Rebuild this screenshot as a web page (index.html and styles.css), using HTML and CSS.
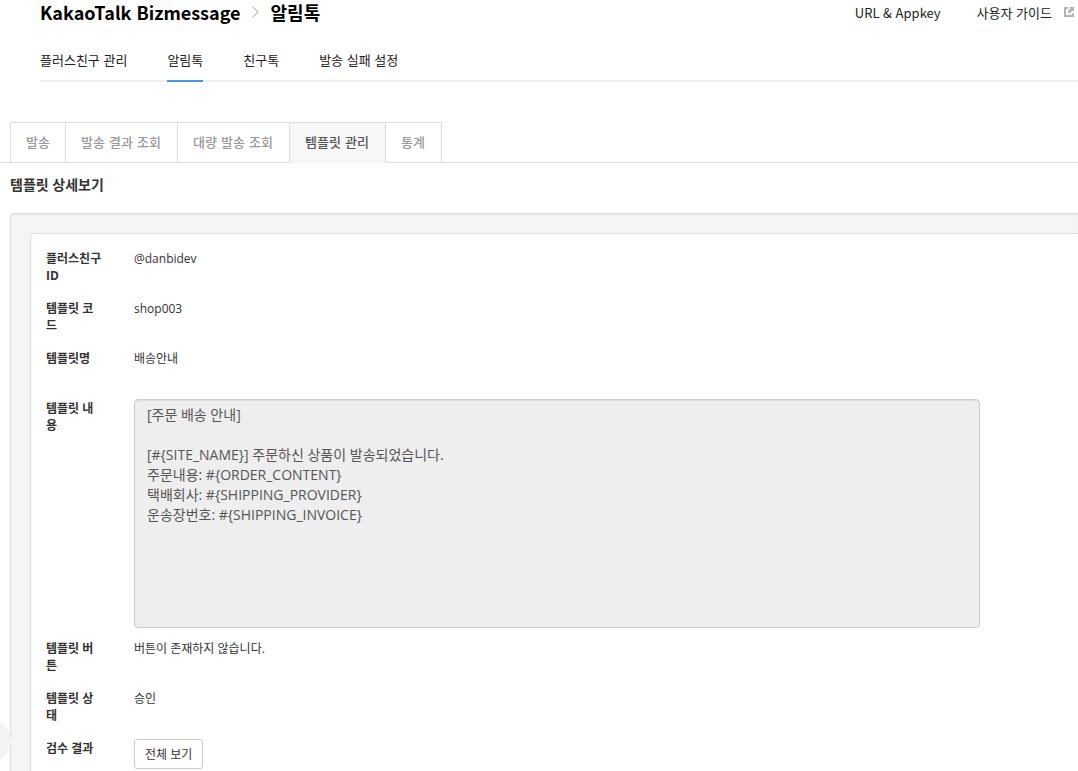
FILE: index.html
```
<!DOCTYPE html>
<html lang="ko">
<head>
    <meta charset="UTF-8">
    <meta name="viewport" content="width=device-width, initial-scale=1.0">
    <title>KakaoTalk Bizmessage</title>
    <link rel="stylesheet" href="styles.css">
</head>
<body>
    <header class="header">
        <div class="header-top">
            <h1 class="breadcrumb">
                <span>KakaoTalk Bizmessage</span>
                <svg class="chevron" width="8" height="12" viewBox="0 0 8 12" aria-hidden="true">
                    <path d="M1 1l5 5-5 5" fill="none" stroke="#aaa" stroke-width="1"/>
                </svg>
                <span>알림톡</span>
            </h1>
            <div class="header-links">
                <a href="#">URL &amp; Appkey</a>
                <a href="#" class="guide">사용자 가이드
                    <svg width="10" height="10" viewBox="0 0 10 10" aria-hidden="true">
                        <path d="M4 1H1v8h8V6.500" fill="none" stroke="#b4b4b4" stroke-width="2"/>
                        <path d="M5 0h5v5L8.500 3.500 5.500 6.500 3.500 4.500l3-3z" fill="#b4b4b4"/>
                    </svg>
                </a>
            </div>
        </div>
        <nav class="menu">
            <a href="#">플러스친구 관리</a>
            <a href="#" class="active">알림톡</a>
            <a href="#">친구톡</a>
            <a href="#">발송 실패 설정</a>
        </nav>
    </header>

    <nav class="tabs">
        <a href="#">발송</a>
        <a href="#">발송 결과 조회</a>
        <a href="#">대량 발송 조회</a>
        <a href="#" class="active">템플릿 관리</a>
        <a href="#">통계</a>
    </nav>

    <main class="content">
        <h2>템플릿 상세보기</h2>
        <div class="well">
            <dl class="detail">
                <div class="row">
                    <dt>플러스친구 ID</dt>
                    <dd>@danbidev</dd>
                </div>
                <div class="row">
                    <dt>템플릿 코드</dt>
                    <dd>shop003</dd>
                </div>
                <div class="row">
                    <dt>템플릿명</dt>
                    <dd>배송안내</dd>
                </div>
                <div class="row">
                    <dt><label for="template-content">템플릿 내용</label></dt>
                    <dd><textarea id="template-content" readonly>[주문 배송 안내]

[#{SITE_NAME}] 주문하신 상품이 발송되었습니다.
주문내용: #{ORDER_CONTENT}
택배회사: #{SHIPPING_PROVIDER}
운송장번호: #{SHIPPING_INVOICE}</textarea></dd>
                </div>
                <div class="row">
                    <dt>템플릿 버튼</dt>
                    <dd>버튼이 존재하지 않습니다.</dd>
                </div>
                <div class="row">
                    <dt>템플릿 상태</dt>
                    <dd>승인</dd>
                </div>
                <div class="row">
                    <dt>검수 결과</dt>
                    <dd><button type="button" class="btn">전체 보기</button></dd>
                </div>
            </dl>
        </div>
    </main>

    <button type="button" class="side-toggle" aria-label="메뉴 열기"></button>
</body>
</html>
```
FILE: styles.css
```
* {
    box-sizing: border-box;
}
body {
    margin: 0;
    overflow-x: hidden;
    font-family: "Open Sans", "Noto Sans CJK KR", sans-serif;
    font-size: 12px;
    line-height: 17px;
    color: #333;
    background-color: #fff;
}
a {
    color: inherit;
    text-decoration: none;
}

/* header */
.header {
    padding-left: 40px;
    font-family: "Noto Sans CJK KR", sans-serif;
    font-size: 13px;
    color: #222;
}
.header-top {
    display: flex;
    justify-content: space-between;
    align-items: center;
    height: 24px;
    padding-right: 4px;
}
.breadcrumb {
    display: flex;
    align-items: center;
    gap: 11px;
    margin: 0;
    font-size: 18px;
    line-height: 24px;
    color: #000;
}
.header-links {
    display: flex;
    gap: 36px;
}
.guide {
    display: flex;
    align-items: center;
    gap: 12px;
}
.menu {
    display: flex;
    gap: 40px;
    margin-top: 22px;
    border-bottom: 2px solid #eee;
}
.menu a {
    height: 36px;
    margin-bottom: -2px;
    line-height: 28px;
    border-bottom: 2px solid transparent;
}
.menu a.active {
    border-color: #4a96e8;
}

/* tabs */
.tabs {
    display: flex;
    margin-top: 40px;
    padding-left: 10px;
    border-bottom: 1px solid #ddd;
    font-family: "DejaVu Sans", "Noto Sans CJK KR", sans-serif;
    font-size: 13px;
    color: #999;
}
.tabs a {
    height: 40px;
    padding: 0 15px;
    line-height: 40px;
    border: 1px solid #ddd;
    border-bottom: 0;
    font-weight: 500;
}
.tabs a + a {
    margin-left: -1px;
    padding-right: 16px;
}
.tabs a.active {
    height: 41px;
    margin-bottom: -1px;
    background-color: #f7f7f7;
    color: #555;
}

/* template detail */
.content {
    padding-left: 10px;
}
h2 {
    margin: 12px 0 19px;
    font-size: 14px;
    line-height: 19px;
}
.well {
    padding: 19px 0 20px 19px;
    background-color: #f5f5f5;
    border: 1px solid #ddd;
    border-right: 0;
    border-radius: 4px 0 0 4px;
    box-shadow: inset 0 1px 1px rgba(0, 0, 0, 0.05);
}
.detail {
    margin: 0;
    padding: 16px 98px 15px 15px;
    background-color: #fff;
    border: 1px solid #ddd;
    border-right: 0;
    border-radius: 4px 0 0 4px;
}
.row {
    display: grid;
    grid-template-columns: 57px 1fr;
    column-gap: 31px;
    min-height: 50px;
}
dt {
    font-weight: bold;
}
dd {
    margin: 0;
}
textarea,
.btn {
    display: block;
    margin-top: -1px;
    font-family: inherit;
    border: 1px solid #ccc;
}
textarea {
    width: 100%;
    height: 229px;
    margin-bottom: 12px;
    padding: 5px 12px;
    font-size: 14px;
    line-height: 20px;
    color: #555;
    background-color: #eee;
    border-radius: 4px;
    box-shadow: inset 0 1px 1px rgba(0, 0, 0, 0.075);
    resize: none;
}
.btn {
    height: 30px;
    padding: 0 10px;
    font-size: 12px;
    color: #333;
    background-color: #fff;
    border-radius: 3px;
    cursor: pointer;
}

/* round handle that peeks out from the left edge */
.side-toggle {
    position: fixed;
    left: -29px;
    bottom: 10px;
    width: 40px;
    height: 40px;
    padding: 0;
    background-color: #f3f3f3;
    border: 0;
    border-radius: 50%;
}
```
